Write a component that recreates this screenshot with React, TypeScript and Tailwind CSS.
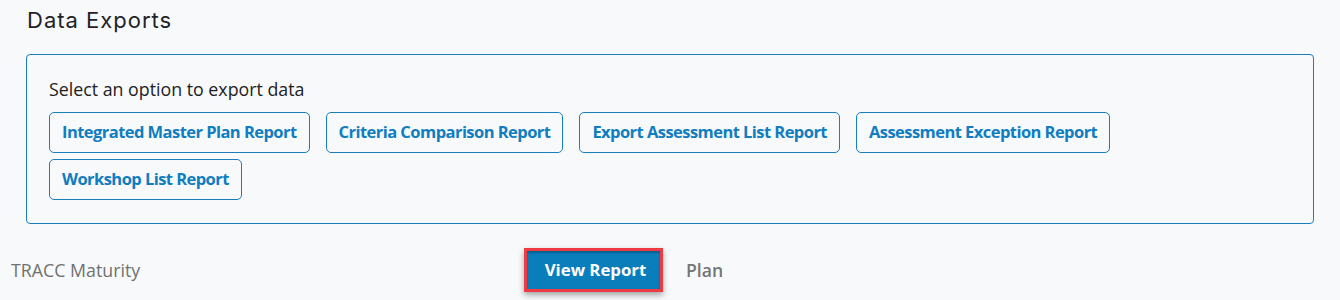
const reports = [
  'Integrated Master Plan Report',
  'Criteria Comparison Report',
  'Export Assessment List Report',
  'Assessment Exception Report',
  'Workshop List Report',
]

export default function App() {
  return (
    <main
      className="h-[300px] w-[1340px] overflow-hidden bg-[#f7f9fb]"
      style={{ fontFamily: '"Open Sans", "Liberation Sans", sans-serif' }}
    >
      {/* Header */}
      <h1
        className="pl-[27px] pt-[5px] text-[22px] leading-[30px] text-[#1f2328] tracking-[1px]"
        style={{ fontFamily: 'Inter, "Noto Sans", sans-serif' }}
      >
        Data Exports
      </h1>

      {/* Export panel */}
      <section className="mx-[26px] mt-[19px] h-[170px] rounded-[4px] border border-[#1a7fb9] px-[22px] pt-[22px]">
        <p className="text-[17.8px] leading-[24px] text-[#222]">Select an option to export data</p>
        <div className="mt-[11px] flex flex-wrap gap-x-[16px] gap-y-[6px]">
          {reports.map((r) => (
            <button
              key={r}
              className="h-[41px] rounded-[5px] border border-[#1a7fb9] bg-transparent px-[12px] text-[16.5px] font-bold tracking-[-0.55px] text-[#0f7dc0]"
            >
              {r}
            </button>
          ))}
        </div>
      </section>

      {/* Table row */}
      <div className="mt-[24px] flex items-center">
        <div className="w-[524px] pl-[11px] text-[17.8px] text-[#717171]">TRACC Maturity</div>
        <div className="border-[3px] border-[#ee3a42] shadow-[0_3px_6px_rgba(0,0,0,0.35)]">
          <button className="h-[38px] w-[133px] bg-[#0a7dbb] pl-[4px] text-[16.8px] font-bold text-white shadow-[inset_0_2px_2px_rgba(0,0,0,0.25)]">
            View Report
          </button>
        </div>
        <div className="ml-[23px] text-[17.6px] font-semibold text-[#757575]">Plan</div>
      </div>
    </main>
  )
}
